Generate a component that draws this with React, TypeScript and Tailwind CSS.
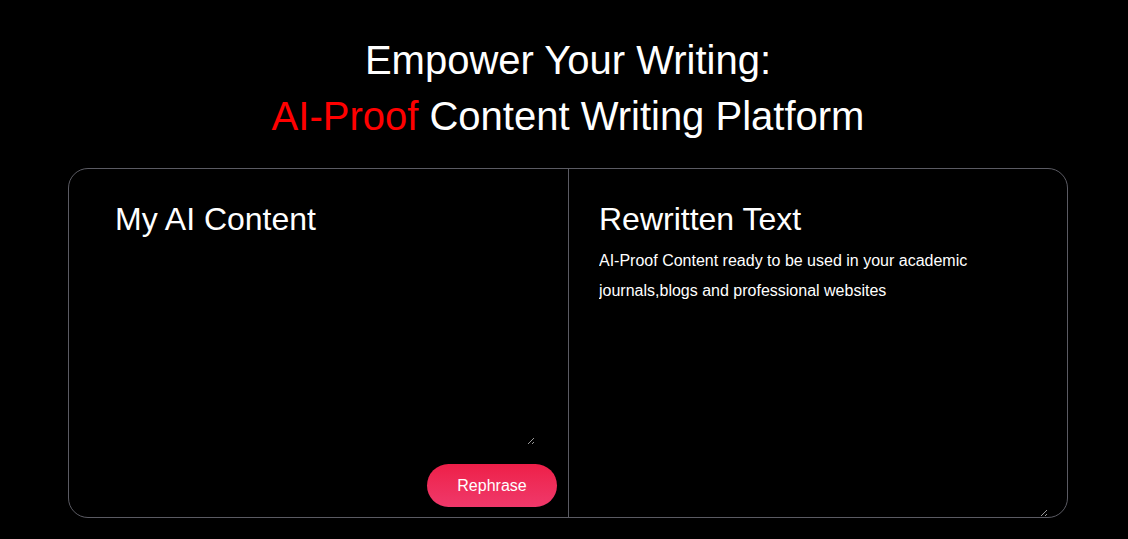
import React from "react"

export default function App() {
  return (
    <div className="min-h-[539px] bg-black text-white font-['Liberation_Sans',Arial,sans-serif]">
      <div className="ml-[68px] w-[1000px] pt-[32px]">
        <h1 className="text-center text-[40px] leading-[56px] font-normal">
          Empower Your Writing:
          <br />
          <span className="text-[#ff0000]">AI-Proof</span> Content Writing Platform
        </h1>

        <div className="mt-[24px] flex h-[350px] rounded-[20px] border border-[#5b5b63] overflow-hidden">
          <div className="flex w-[500px] flex-col border-r border-[#5b5b63] pl-[46px] pr-[11px] pt-[32px] pb-[10px]">
            <h2 className="text-[32px] leading-[37px]">My AI Content</h2>
            <textarea
              className="mt-[12px] mr-[22px] flex-1 resize-y bg-black text-[16px] text-white outline-none"
              defaultValue=""
            />
            <div className="mt-[19px] flex justify-end">
              <button className="h-[43px] w-[130px] rounded-full bg-gradient-to-b from-[#ee1e48] to-[#ef386a] text-[16px] text-white">
                Rephrase
              </button>
            </div>
          </div>
          <div className="flex flex-1 flex-col pl-[30px] pr-[19px] pt-[32px]">
            <h2 className="text-[32px] leading-[37px]">Rewritten Text</h2>
            <textarea
              className="mt-[8px] flex-1 resize-y bg-black text-[16px] leading-[30px] text-white outline-none"
              defaultValue="AI-Proof Content ready to be used in your academic journals,blogs and professional websites"
            />
          </div>
        </div>
      </div>
    </div>
  )
}
